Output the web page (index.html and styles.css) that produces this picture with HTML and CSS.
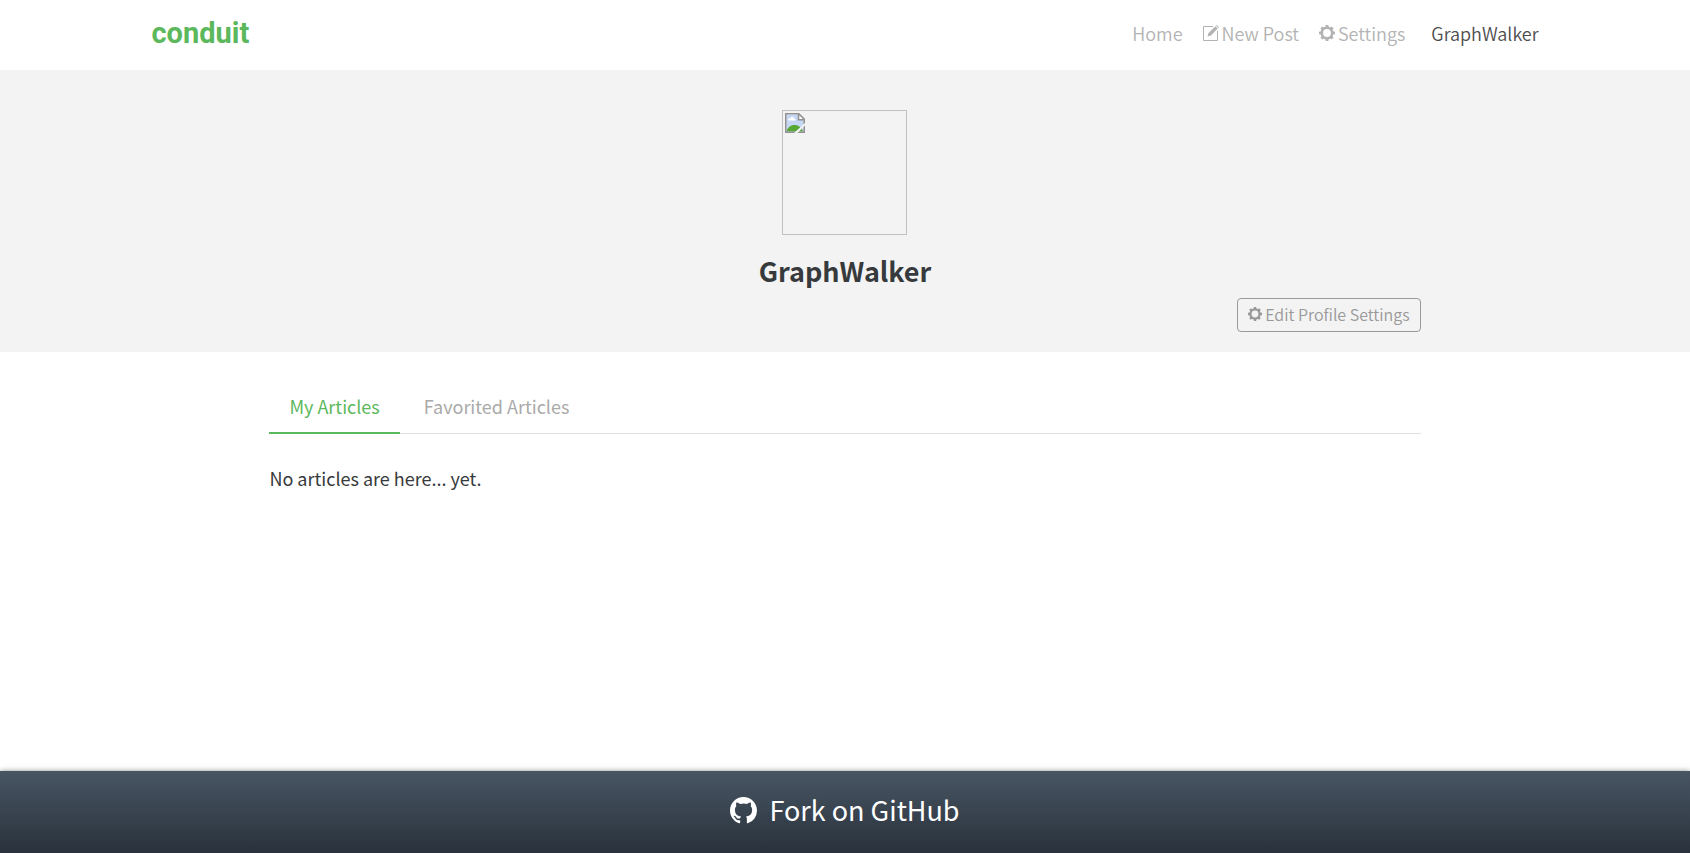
FILE: index.html
```html
<!DOCTYPE html>
<html lang="en">
<head>
<meta charset="utf-8">
<title>Conduit</title>
<link rel="stylesheet" href="styles.css">
</head>
<body>
<svg class="symbols" aria-hidden="true">
  <symbol id="gear" viewBox="0 0 16 16">
    <circle cx="8" cy="8" r="5.2" fill="none" stroke="currentColor" stroke-width="2.6"/>
    <g fill="currentColor">
      <path id="tooth" d="M6.200 2.600 6.700 0h2.600l.5 2.600z"/>
      <use href="#tooth" transform="rotate(45 8 8)"/>
      <use href="#tooth" transform="rotate(90 8 8)"/>
      <use href="#tooth" transform="rotate(135 8 8)"/>
      <use href="#tooth" transform="rotate(180 8 8)"/>
      <use href="#tooth" transform="rotate(225 8 8)"/>
      <use href="#tooth" transform="rotate(270 8 8)"/>
      <use href="#tooth" transform="rotate(315 8 8)"/>
    </g>
  </symbol>
</svg>
<header class="navbar">
  <nav class="container navbar-inner">
    <a class="brand" href="#">conduit</a>
    <ul class="nav">
      <li><a class="nav-link" href="#">Home</a></li>
      <li><a class="nav-link" href="#"><svg class="icon" viewBox="0 0 16 16" aria-hidden="true"><path d="M10 1.500H.5v14h14V6" fill="none" stroke="currentColor"/><path d="M4.500 11.500l1-3.500L12.400 1.300l2.300 2.300L8 10.500zM13 .7l.7-.7L16 2.300l-.7.7z" fill="currentColor"/></svg>New Post</a></li>
      <li><a class="nav-link" href="#"><svg class="icon" aria-hidden="true"><use href="#gear"/></svg>Settings</a></li>
      <li><a class="nav-link user" href="#">GraphWalker</a></li>
    </ul>
  </nav>
</header>
<main>
  <section class="profile">
    <div class="container"><div class="column profile-inner">
      <div class="avatar" role="img" aria-label="Profile picture">
        <svg class="broken" viewBox="0 0 20 20" aria-hidden="true">
          <path d="M.5.5h13l6 6v13H.5z" fill="#fff"/>
          <path d="M1.500 1.500h12v5h5v12h-17z" fill="#c5d7f5"/>
          <path d="M3 7c0-2 2-2 2.500-1.500C6 3 9 3.500 9 5.500c2 0 2 2 .5 2H3.500z" fill="#fff"/>
          <path d="M1.500 18.500c1-4 4-6.500 8-6.500s7 2.500 8.500 6.500z" fill="#58a836"/>
          <path d="M.8.8h13l5.400 5.400v13H.8zM13.500.8v6h6" fill="none" stroke="#929292" stroke-width="1.600"/>
          <path d="M20.500 9.500v2.500L12 20.500H8.500z" fill="#f3f3f3"/>
        </svg>
      </div>
      <h1 class="name">GraphWalker</h1>
      <a class="edit" href="#"><svg class="icon" aria-hidden="true"><use href="#gear"/></svg>Edit Profile Settings</a>
    </div></div>
  </section>
  <section class="container"><div class="column">
    <ul class="tabs">
      <li><a class="tab active" href="#">My Articles</a></li>
      <li><a class="tab" href="#">Favorited Articles</a></li>
    </ul>
    <p class="empty">No articles are here... yet.</p>
  </div></section>
</main>
<a class="fork" href="#">
  <svg class="github" viewBox="0 0 16 16" aria-hidden="true"><path fill="currentColor" d="M8 0C3.580 0 0 3.580 0 8c0 3.540 2.290 6.530 5.470 7.590.4.070.55-.17.55-.38 0-.19-.01-.82-.01-1.490-2.010.37-2.530-.49-2.690-.94-.09-.23-.48-.94-.82-1.130-.28-.15-.68-.52-.01-.53.63-.01 1.080.58 1.230.82.72 1.210 1.870.87 2.330.66.07-.52.28-.87.51-1.070-1.780-.2-3.640-.89-3.640-3.950 0-.87.31-1.590.82-2.150-.08-.2-.36-1.020.08-2.120 0 0 .67-.21 2.200.82a7.400 7.400 0 0 1 4 0c1.530-1.040 2.200-.82 2.200-.82.44 1.100.16 1.920.08 2.120.51.56.82 1.270.82 2.150 0 3.070-1.870 3.750-3.650 3.950.29.25.54.73.54 1.480 0 1.070-.01 1.930-.01 2.200 0 .21.15.46.55.38A8 8 0 0 0 16 8c0-4.420-3.580-8-8-8z"/></svg>
  Fork on GitHub
</a>
</body>
</html>
```
FILE: styles.css
```css
* { box-sizing: border-box; }
body {
  margin: 0;
  min-height: 100vh;
  display: flex;
  flex-direction: column;
  background: #fff;
  color: #373a3c;
  font: 18px/30px "Noto Sans CJK SC", "Source Sans Pro", sans-serif;
}
main { flex: 1; }
a { color: inherit; text-decoration: none; }
ul { margin: 0; padding: 0; list-style: none; display: flex; }
.symbols { position: absolute; width: 0; height: 0; }
.container { width: 100%; max-width: 1425px; margin: 0 auto; padding: 0 19px; }
.column { width: 83%; margin: 0 auto; }
.navbar-inner { display: flex; justify-content: space-between; padding-top: 15px; padding-bottom: 19px; align-items: center; }
.brand { color: #5cb85c; font: bold 29px/36px Roboto, sans-serif; }
.nav { gap: 20px; }
.nav-link { display: flex; align-items: center; color: #b3b3b3; font-weight: 350; }
.user { color: #4d4d4d; padding-left: 6px; }
.icon { width: 16px; height: 16px; margin-right: 3px; flex: none; }
.profile { background: #f3f3f3; padding: 40px 0 20px; }
.profile-inner { display: flex; flex-direction: column; align-items: center; }
.avatar { width: 125px; height: 125px; border: 1px solid #c0c0c0; padding: 2px; }
.broken { display: block; width: 20px; height: 20px; }
.name { margin: 20px 0 11px; font-size: 27px; line-height: 32px; font-weight: 700; }
.edit {
  align-self: flex-end;
  display: flex;
  align-items: center;
  border: 1px solid #999;
  border-radius: 4px;
  padding: 3px 10px 5px;
  color: #999;
  font-size: 16px;
  line-height: 24px;
  font-weight: 350;
}
.edit .icon { width: 14px; height: 14px; }
.tabs { margin-top: 35px; border-bottom: 1px solid #e0e0e0; }
.tab { display: block; padding: 4px 24px 11px; color: #aaa; margin-bottom: -1px; border-bottom: 2px solid transparent; }
.tab.active { color: #5cb85c; border-color: #5cb85c; padding-left: 20px; padding-right: 20px; }
.empty { margin: 29px 0; }
.fork {
  display: flex;
  align-items: center;
  justify-content: center;
  gap: 12px;
  padding: 19px 0 23px;
  background: linear-gradient(#485563, #29323c);
  box-shadow: 0 1px 6px rgba(0, 0, 0, .6);
  color: #fff;
  font-size: 27px;
  line-height: 40px;
}
.github { width: 27px; height: 27px; }
```
